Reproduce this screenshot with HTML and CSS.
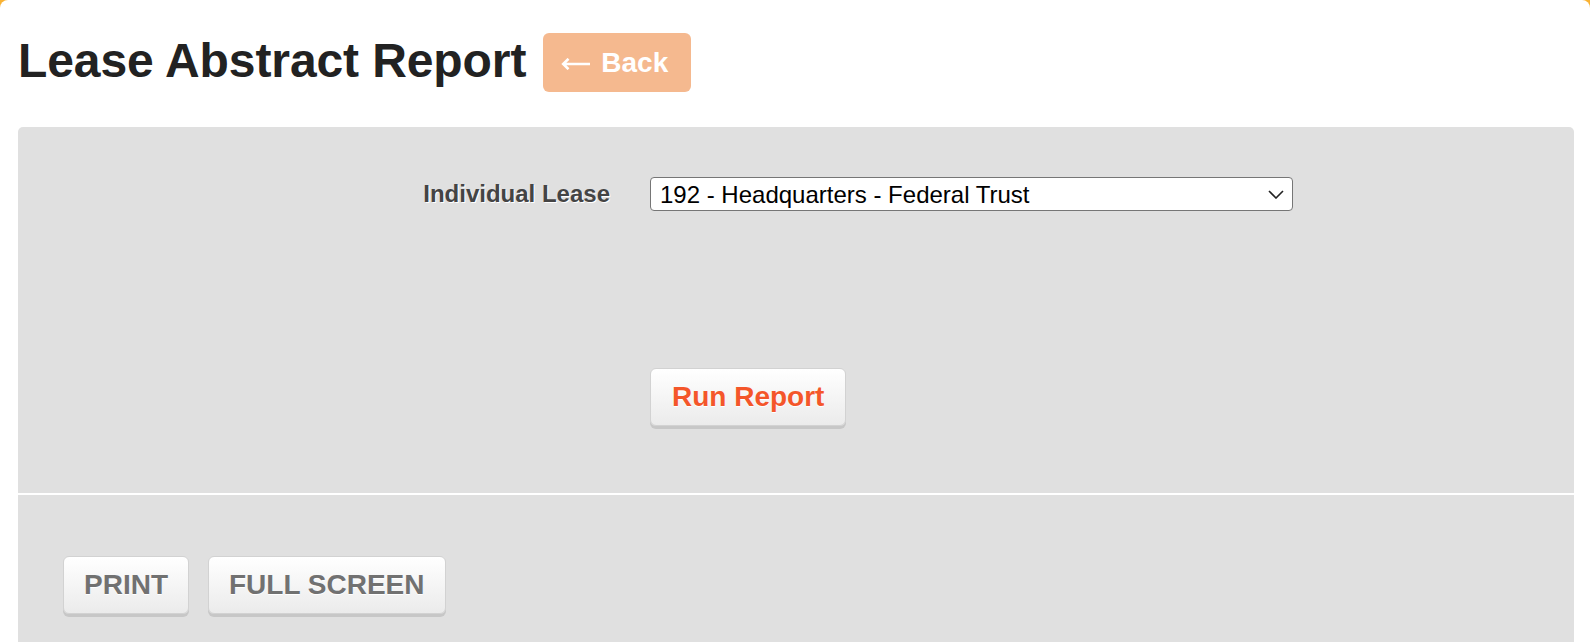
FILE: index.html
```html
<!DOCTYPE html>
<html lang="en">
<head>
<meta charset="utf-8">
<title>Lease Abstract Report</title>
<link rel="stylesheet" href="styles.css">
</head>
<body>
<div class="page">
  <header class="head">
    <h1 class="title">Lease Abstract Report</h1>
    <a class="back" href="#"><svg class="arrow" width="29" height="12" viewBox="0 0 29 12"><path d="M2 6 H29 M7.5 0.8 L2.2 6 L7.5 11.2" fill="none" stroke="#ffffff" stroke-width="2.6"/></svg><span>Back</span></a>
  </header>
  <section class="panel">
    <div class="filters">
      <div class="row">
        <label class="field-label" for="lease">Individual Lease</label>
        <div class="select-wrap">
          <select id="lease" class="select">
            <option>192 - Headquarters - Federal Trust</option>
          </select>
          <svg class="chev" width="16" height="9" viewBox="0 0 16 9"><path d="M1 1 L8 8 L15 1" fill="none" stroke="#222" stroke-width="1.6"/></svg>
        </div>
      </div>
      <div class="row actions">
        <span></span>
        <div><button class="btn btn-run">Run Report</button></div>
      </div>
    </div>
    <div class="toolbar">
      <button class="btn">PRINT</button>
      <button class="btn">FULL SCREEN</button>
    </div>
  </section>
</div>
</body>
</html>
```
FILE: styles.css
```css
html {
  background: #f9b233;
  height: 100%;
}
body {
  margin: 0;
  font-family: "Liberation Sans", Arial, sans-serif;
  height: 100%;
  overflow: hidden;
}
.page {
  background: #ffffff;
  min-height: 100%;
  border-radius: 8px 8px 0 0;
  padding: 33px 16px 0 18px;
  box-sizing: border-box;
}
.head {
  display: flex;
  align-items: center;
  gap: 17px;
  height: 59px;
  margin-bottom: 35px;
}
.title {
  margin: 0 0 4px 0;
  font-size: 48px;
  font-weight: bold;
  color: #222222;
  letter-spacing: -0.1px;
  line-height: 1.15;
}
.back {
  display: flex;
  align-items: center;
  gap: 11px;
  height: 59px;
  padding: 0 23px 0 18px;
  box-sizing: border-box;
  background: #f5b98f;
  color: #ffffff;
  font-size: 28px;
  font-weight: bold;
  text-decoration: none;
  border-radius: 6px;
}
.arrow {
  display: block;
  margin-top: 2px;
}
.panel {
  background: #e0e0e0;
  border-radius: 5px 5px 0 0;
  min-height: 600px;
}
.filters {
  padding: 50px 0 67px 0;
}
.row {
  display: grid;
  grid-template-columns: 592px 643px;
  column-gap: 40px;
  align-items: center;
}
.field-label {
  text-align: right;
  font-size: 24px;
  font-weight: bold;
  color: #444444;
  text-shadow: 1px 1px 0 #ffffff;
}
.select-wrap {
  position: relative;
  height: 34px;
}
.select {
  appearance: none;
  -webkit-appearance: none;
  width: 100%;
  height: 34px;
  margin: 0;
  padding: 0 40px 0 9px;
  border: 1px solid #767676;
  border-radius: 4px;
  background: #ffffff;
  font-family: "Liberation Sans", Arial, sans-serif;
  font-size: 24px;
  color: #000000;
}
.chev {
  position: absolute;
  right: 9px;
  top: 13px;
  pointer-events: none;
}
.actions {
  margin-top: 157px;
}
.btn {
  height: 58px;
  padding: 0 20px;
  border: 1px solid #d2d2d2;
  border-radius: 6px;
  background: linear-gradient(#ffffff, #ebebeb);
  box-shadow: 0 3px 0 #c7c7c7;
  font-family: "Liberation Sans", Arial, sans-serif;
  font-size: 28px;
  font-weight: bold;
  color: #717171;
  text-shadow: 0 1px 0 #ffffff;
  cursor: pointer;
}
.btn-run {
  color: #f4562a;
  padding: 0 21px;
}
.toolbar {
  border-top: 2px solid #ffffff;
  padding: 61px 45px 40px;
  display: flex;
  gap: 19px;
}
```
